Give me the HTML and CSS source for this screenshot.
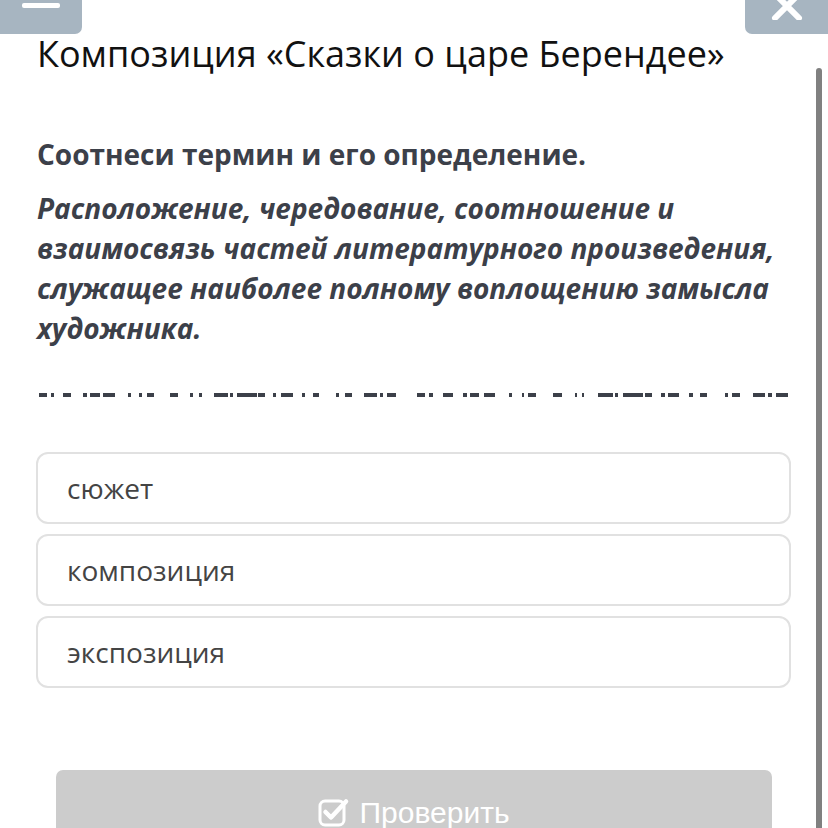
FILE: index.html
```html
<!DOCTYPE html>
<html lang="ru">
<head>
  <meta charset="UTF-8">
  <meta name="viewport" content="width=device-width, initial-scale=1">
  <title>Композиция</title>
  <link rel="stylesheet" href="styles.css">
</head>
<body>

  <div class="topbar">
    <div class="tab-btn tab-left">
      <span class="minus"></span>
    </div>
    <div class="tab-btn tab-right">
      <svg class="close" width="32" height="20" viewBox="0 0 32 20">
        <path d="M4 -6 L28 18 M28 -6 L4 18" stroke="#fff" stroke-width="6" stroke-linecap="round"/>
      </svg>
    </div>
  </div>

  <div class="scroll-thumb"></div>

  <div class="content">
    <h1>Композиция «Сказки о царе Берендее»</h1>
    <h2>Соотнеси термин и его определение.</h2>
    <p class="definition">Расположение, чередование, соотношение и взаимосвязь частей литературного произведения, служащее наиболее полному воплощению замысла художника.</p>

    <svg class="cut-line" width="760" height="5" viewBox="0 0 760 5">
      <g fill="#3c4049">
        <rect x="3" y="0" width="8" height="4"/>
        <rect x="15" y="0" width="3" height="4"/>
        <rect x="27" y="0" width="8" height="4"/>
        <rect x="47" y="0" width="4" height="4"/>
        <rect x="54" y="0" width="10" height="4"/>
        <rect x="67" y="0" width="12" height="4"/>
        <rect x="92" y="0" width="3" height="4"/>
        <rect x="103" y="0" width="3" height="4"/>
        <rect x="111" y="0" width="7" height="4"/>
        <rect x="134" y="0" width="8" height="4"/>
        <rect x="154" y="0" width="3" height="4"/>
        <rect x="163" y="0" width="3" height="4"/>
        <rect x="178" y="0" width="14" height="4"/>
        <rect x="194" y="0" width="3" height="4"/>
        <rect x="201" y="0" width="20" height="4"/>
        <rect x="222" y="0" width="7" height="4"/>
        <rect x="237" y="0" width="3" height="4"/>
        <rect x="245" y="0" width="12" height="4"/>
        <rect x="266" y="0" width="3" height="4"/>
        <rect x="277" y="0" width="6" height="4"/>
        <rect x="300" y="0" width="3" height="4"/>
        <rect x="309" y="0" width="7" height="4"/>
        <rect x="328" y="0" width="13" height="4"/>
        <rect x="344" y="0" width="3" height="4"/>
        <rect x="351" y="0" width="9" height="4"/>

        <rect x="381" y="0" width="8" height="4"/>
        <rect x="393" y="0" width="4" height="4"/>
        <rect x="407" y="0" width="10" height="4"/>
        <rect x="427" y="0" width="4" height="4"/>
        <rect x="434" y="0" width="9" height="4"/>
        <rect x="448" y="0" width="11" height="4"/>
        <rect x="473" y="0" width="3" height="4"/>
        <rect x="486" y="0" width="2" height="4"/>
        <rect x="492" y="0" width="8" height="4"/>
        <rect x="517" y="0" width="9" height="4"/>
        <rect x="539" y="0" width="2" height="4"/>
        <rect x="546" y="0" width="2" height="4"/>
        <rect x="562" y="0" width="15" height="4"/>
        <rect x="579" y="0" width="3" height="4"/>
        <rect x="587" y="0" width="20" height="4"/>
        <rect x="609" y="0" width="7" height="4"/>
        <rect x="625" y="0" width="4" height="4"/>
        <rect x="632" y="0" width="11" height="4"/>
        <rect x="653" y="0" width="4" height="4"/>
        <rect x="664" y="0" width="7" height="4"/>
        <rect x="689" y="0" width="3" height="4"/>
        <rect x="696" y="0" width="8" height="4"/>
        <rect x="717" y="0" width="12" height="4"/>
        <rect x="732" y="0" width="4" height="4"/>
        <rect x="740" y="0" width="12" height="4"/>
      </g>
    </svg>

    <div class="options">
      <div class="option">сюжет</div>
      <div class="option">композиция</div>
      <div class="option">экспозиция</div>
    </div>

    <div class="check-btn">
      <svg class="check-icon" width="32" height="32" viewBox="0 0 32 32">
        <rect x="2" y="5" width="24" height="24" rx="5" fill="none" stroke="#fff" stroke-width="3"/>
        <path d="M7.5 16 L13 21.5 L28 5.5" fill="none" stroke="#fff" stroke-width="4.5" stroke-linecap="round" stroke-linejoin="round"/>
      </svg>
      <span>Проверить</span>
    </div>
  </div>

</body>
</html>
```

FILE: styles.css
```css
html, body {
  margin: 0;
  height: 828px;
  overflow: hidden;
  background: #fff;
}
body {
  font-family: "Open Sans", sans-serif;
}
.topbar {
  display: flex;
  justify-content: space-between;
  height: 31px;
}
.tab-btn {
  background: #a7b5c1;
  height: 34px;
  position: relative;
  z-index: 1;
}
.tab-left {
  width: 82px;
  border-bottom-right-radius: 7px;
}
.tab-right {
  width: 83px;
  border-bottom-left-radius: 7px;
}
.minus {
  display: block;
  margin: 3px 0 0 22px;
  width: 38px;
  height: 5px;
  background: #fff;
  border-radius: 2px;
}
.close {
  display: block;
  margin-left: 26px;
}
.scroll-thumb {
  position: fixed;
  right: 6px;
  top: 68px;
  width: 6px;
  height: 780px;
  background: #808080;
  border-radius: 3px 3px 0 0;
}
.content {
  padding: 0 36px;
}
h1 {
  margin: 0;
  font-size: 36px;
  line-height: 46px;
  font-weight: 400;
  color: #111;
  padding-left: 1px;
}
h2 {
  margin: 57px 0 0 1px;
  font-size: 28px;
  line-height: 40px;
  font-weight: 700;
  color: #3c4049;
}
.definition {
  margin: 14px 0 0 1px;
  font-size: 28px;
  line-height: 40px;
  font-weight: 700;
  font-style: italic;
  color: #3c4049;
}
.cut-line {
  display: block;
  margin-top: 45px;
}
.options {
  display: flex;
  flex-direction: column;
  gap: 10px;
  margin-top: 54px;
  width: 755px;
}
.option {
  box-sizing: border-box;
  height: 72px;
  border: 2px solid #e1e1e1;
  border-radius: 12px;
  padding-left: 29px;
  display: flex;
  align-items: center;
  font-size: 28px;
  color: #444;
}
.check-btn {
  margin: 82px 20px 0 20px;
  height: 80px;
  width: 716px;
  background: #cccccc;
  border-radius: 7px;
  display: flex;
  justify-content: center;
  align-items: flex-start;
  gap: 9px;
  padding-top: 26px;
  box-sizing: border-box;
  font-family: "Liberation Sans", Arial, sans-serif;
  font-size: 30px;
  color: #fff;
}
.check-icon {
  margin-top: 0;
}
```
